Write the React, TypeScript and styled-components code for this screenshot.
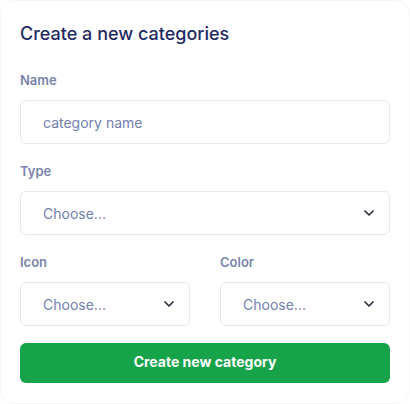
import React from "react";
import styled, { createGlobalStyle } from "styled-components";

const Global = createGlobalStyle`
  html, body { margin: 0; padding: 0; background: #ffffff; }
  body { font-family: "Inter", "Roboto", sans-serif; }
  * { box-sizing: border-box; }
`;

const Card = styled.div`
  width: 410px;
  height: 404px;
  background: #fff;
  border: 1px solid #f5f6f8;
  border-radius: 14px;
  padding: 19px 19px;
  display: flex;
  flex-direction: column;
`;

const Title = styled.h2`
  margin: 0 0 22px;
  font-size: 18px;
  line-height: 28px;
  font-weight: 500;
  color: #1f2a5f;
`;

const Form = styled.div`
  display: flex;
  flex-direction: column;
  gap: 17px;
`;

const Row = styled.div`
  display: grid;
  grid-template-columns: 1fr 1fr;
  column-gap: 30px;
`;

const Field = styled.div`
  display: flex;
  flex-direction: column;
`;

const Label = styled.label`
  font-size: 13px;
  line-height: 20px;
  font-weight: 600;
  color: #7a84aa;
  margin-bottom: 10px;
`;

const Box = styled.div`
  height: 44px;
  border: 1px solid #e4e7ee;
  border-radius: 6px;
  background: #fff;
  display: flex;
  align-items: center;
  justify-content: space-between;
  padding: 0 12px 0 22px;
  font-size: 14px;
  color: #7280ad;
`;

const Chevron = () => (
  <svg width="16" height="16" viewBox="0 0 24 24" fill="none" stroke="#2b3140" strokeWidth="2.6" strokeLinecap="round" strokeLinejoin="round">
    <path d="M6 9l6 6 6-6" />
  </svg>
);

const Select = ({ text }: { text: string }) => (
  <Box>
    <span>{text}</span>
    <Chevron />
  </Box>
);

const Button = styled.button`
  height: 40px;
  border: none;
  border-radius: 6px;
  background: #16a34a;
  color: #fff;
  font-family: inherit;
  font-size: 14px;
  font-weight: 700;
  padding: 0 0 3px;
  cursor: pointer;
`;

export default function App() {
  return (
    <>
      <Global />
      <Card>
        <Title>Create a new categories</Title>
        <Form>
          <Field>
            <Label>Name</Label>
            <Box>category name</Box>
          </Field>
          <Field>
            <Label>Type</Label>
            <Select text="Choose..." />
          </Field>
          <Row>
            <Field>
              <Label>Icon</Label>
              <Select text="Choose..." />
            </Field>
            <Field>
              <Label>Color</Label>
              <Select text="Choose..." />
            </Field>
          </Row>
          <Button>Create new category</Button>
        </Form>
      </Card>
    </>
  );
}
